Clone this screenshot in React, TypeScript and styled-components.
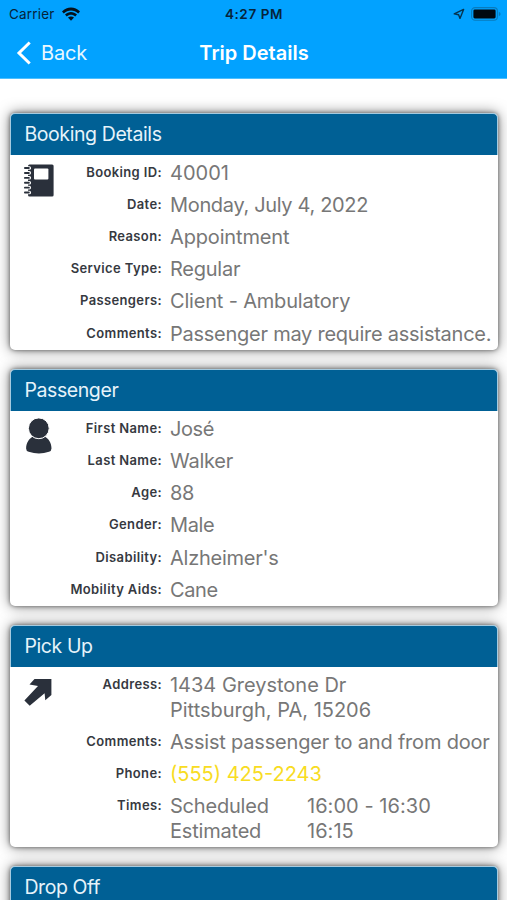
import React from "react";
import styled, { createGlobalStyle } from "styled-components";

const GlobalStyle = createGlobalStyle`
  * { box-sizing: border-box; }
  html, body { margin: 0; background: #fff; overflow: hidden; }
  body { font-family: Inter, "Liberation Sans", sans-serif; }
`;

const Screen = styled.div`
  width: 507px;
  height: 900px;
  overflow: hidden;
  background: #fff;
`;

const TopBar = styled.header`
  height: 79.4px;
  background: #02a2ff;
  border-bottom: 1px solid #4dbfff;
`;

const StatusBar = styled.div`
  height: 27px;
  display: grid;
  grid-template-columns: 1fr auto 1fr;
  align-items: center;
  padding: 0 6px 0 9px;
  color: #06243a;
  font-size: 13.5px;
`;

const StatusSide = styled.div<{ $end?: boolean }>`
  display: flex;
  align-items: center;
  gap: ${(p) => (p.$end ? "6px" : "7px")};
  letter-spacing: 0.2px;
  justify-content: ${(p) => (p.$end ? "flex-end" : "flex-start")};
`;

const Clock = styled.span`
  font-weight: 600;
  font-size: 13.5px;
  letter-spacing: 0.6px;
  margin-left: -2px;
`;

const NavBar = styled.nav`
  height: 51px;
  display: grid;
  grid-template-columns: 1fr auto 1fr;
  align-items: center;
  padding: 0 15px 0 16px;
  color: #fff;
`;

const BackButton = styled.button`
  display: flex;
  align-items: center;
  gap: 10px;
  padding: 0;
  border: 0;
  background: none;
  color: #e9f8ff;
  font: 400 20px Inter, sans-serif;
  letter-spacing: -0.15px;
`;

const Title = styled.h1`
  margin: 0;
  font-size: 20px;
  font-weight: 600;
  letter-spacing: 0;
`;

const Cards = styled.main`
  display: flex;
  flex-direction: column;
  gap: 19.2px;
  padding: 33.4px 9.5px 0 10.4px;
`;

const Card = styled.section`
  flex: none;
  border-radius: 5px;
  background: #fff;
  box-shadow: 0 0 4px rgba(0, 0, 0, 0.5), 0 0 14px rgba(0, 0, 0, 0.5);
`;

const CardHeader = styled.h2`
  height: 42px;
  margin: 0;
  padding: 0 13px;
  border: solid #a5cbe0;
  border-width: 0.5px 0.5px 0;
  border-radius: 5px 5px 0 0;
  background: #006095;
  color: #e6f3fa;
  font-size: 19.5px;
  font-weight: 400;
  line-height: 41px;
  letter-spacing: -0.4px;
`;

const CardBody = styled.div`
  display: grid;
  grid-template-columns: 45.1px 1fr;
  padding: 6.1px 0 3.6px 12.5px;
`;

const IconSlot = styled.div`
  padding-top: 3px;
  height: 40px;
  svg { display: block; }
`;

const Fields = styled.dl`
  display: flex;
  flex-direction: column;
  gap: 7.55px;
  margin: 0;
`;

const Field = styled.div`
  display: grid;
  grid-template-columns: 94px 1fr;
  column-gap: 8px;
`;

const Label = styled.dt`
  text-align: right;
  white-space: nowrap;
  font-size: 13px;
  font-weight: 600;
  line-height: 23px;
  letter-spacing: 0.37px;
  color: #36393f;
`;

const Value = styled.dd<{ $link?: boolean; $tracking?: number }>`
  margin: 0;
  white-space: nowrap;
  font-size: 20px;
  line-height: 24.6px;
  letter-spacing: ${(p) => p.$tracking ?? -0.25}px;
  color: ${(p) => (p.$link ? "#f8dc22" : "#777")};
`;

const TimeRow = styled.div`
  display: grid;
  grid-template-columns: 137px 1fr;
`;

const TimeSpan = styled.span`
  letter-spacing: 0.05px;
`;

const Wifi = () => (
  <svg width="18" height="14" viewBox="0 0 18 14" fill="#06121c">
    <path d="M0 4.5C5-.7 13-.7 18 4.5L16.2 6.4C12.2 2.5 5.8 2.5 1.8 6.4Z" />
    <path d="M3 7.6C6.4 4.2 11.6 4.2 15 7.6L13.2 9.4C10.8 7.2 7.2 7.2 4.8 9.4Z" />
    <path d="M6 10.6C7.7 9 10.3 9 12 10.6L9 13.7Z" />
  </svg>
);

const LocationArrow = () => (
  <svg width="12" height="12" viewBox="0 0 12 12" fill="none" stroke="#06344f" strokeWidth="1.4" strokeLinejoin="round">
    <path d="M1.2 5.8 10.6 1.4 7 10.4 5.6 6.8Z" />
  </svg>
);

const Battery = () => (
  <svg width="30" height="14" viewBox="0 0 30 14">
    <rect x=".6" y=".6" width="25.8" height="12.6" rx="3.5" fill="none" stroke="#087bbd" strokeWidth="1.1" />
    <rect x="2.4" y="2.4" width="22.2" height="9" rx="1.4" fill="#000810" />
    <path d="M27.8 4.7Q29.6 5.4 29.6 7T27.8 9.3Z" fill="#087bbd" />
  </svg>
);

const Chevron = () => (
  <svg width="15" height="24" viewBox="0 0 15 24" fill="none" stroke="#fff" strokeWidth="3">
    <path d="M13.7 1.5 3 12 13.7 22.5" />
  </svg>
);

const Notebook = () => (
  <svg width="32" height="34" viewBox="0 0 32 34">
    <rect x="5" y=".4" width="25.6" height="32" rx="1.5" fill="#2a303b" />
    {[4, 8.9, 13.8, 18.7, 23.6, 28.5].map((y) => (
      <g key={y}>
        <rect x="3" y={y - 1.8} width="5" height="3.6" rx="1.6" fill="#fff" />
        <rect x="1" y={y - 0.9} width="5.8" height="1.9" rx=".9" fill="#2a303b" />
      </g>
    ))}
    <rect x="11" y="4.6" width="14.4" height="10.8" rx="1" fill="#fff" />
  </svg>
);

const PersonSvg = styled.svg`
  overflow: visible;
`;

const Person = () => (
  <PersonSvg width="32" height="36" viewBox="0 0 32 36" fill="#2a303b">
    <path d="M3.1 28.4C3.2 22.4 6.5 18.4 9.6 16.8C13.6 19.6 18 19.6 22 16.8C25.2 18.4 28.4 22.4 28.5 28.4Q28.4 30.9 26 31.8Q16 35 5.7 31.8Q3.1 30.9 3.1 28.4Z" />
    <circle cx="15.8" cy="8.3" r="10.4" stroke="#fff" strokeWidth="1" />
  </PersonSvg>
);

const UpArrow = () => (
  <svg width="32" height="32" viewBox="0 0 32 32" fill="#2a303b">
    <path d="M11.5 3H28.4V19L22.3 24.3 21.6 17.2 6.7 29.8 1.4 24.6 15 10 6.5 8.4Z" />
  </svg>
);

interface Item {
  label: string;
  value: React.ReactNode;
  link?: boolean;
  tracking?: number;
}

interface InfoCardProps {
  title: string;
  icon: React.ReactNode;
  items: Item[];
}

const InfoCard = ({ title, icon, items }: InfoCardProps) => (
  <Card>
    <CardHeader>{title}</CardHeader>
    <CardBody>
      <IconSlot>{icon}</IconSlot>
      <Fields>
        {items.map((item) => (
          <Field key={item.label}>
            <Label>{item.label}:</Label>
            <Value $link={item.link} $tracking={item.tracking}>{item.value}</Value>
          </Field>
        ))}
      </Fields>
    </CardBody>
  </Card>
);

const booking: Item[] = [
  { label: "Booking ID", value: "40001", tracking: 0 },
  { label: "Date", value: "Monday, July 4, 2022", tracking: -0.33 },
  { label: "Reason", value: "Appointment", tracking: -0.15 },
  { label: "Service Type", value: "Regular" },
  { label: "Passengers", value: "Client - Ambulatory", tracking: -0.18 },
  { label: "Comments", value: "Passenger may require assistance." },
];

const passenger: Item[] = [
  { label: "First Name", value: "José", tracking: -0.4 },
  { label: "Last Name", value: "Walker" },
  { label: "Age", value: "88" },
  { label: "Gender", value: "Male", tracking: -0.4 },
  { label: "Disability", value: "Alzheimer's" },
  { label: "Mobility Aids", value: "Cane", tracking: -0.4 },
];

const pickUp: Item[] = [
  { label: "Address", value: <>1434 Greystone Dr<br />Pittsburgh, PA, 15206</>, tracking: -0.01 },
  { label: "Comments", value: "Assist passenger to and from door", tracking: -0.2 },
  { label: "Phone", value: "(555) 425-2243", link: true, tracking: 0 },
  {
    label: "Times",
    value: (
      <>
        <TimeRow><span>Scheduled</span><TimeSpan>16:00 - 16:30</TimeSpan></TimeRow>
        <TimeRow><span>Estimated</span><TimeSpan>16:15</TimeSpan></TimeRow>
      </>
    ),
    tracking: -0.2,
  },
];

export default function App() {
  return (
    <Screen>
      <GlobalStyle />
      <TopBar>
        <StatusBar>
          <StatusSide>Carrier <Wifi /></StatusSide>
          <Clock>4:27 PM</Clock>
          <StatusSide $end><LocationArrow /><Battery /></StatusSide>
        </StatusBar>
        <NavBar>
          <BackButton><Chevron />Back</BackButton>
          <Title>Trip Details</Title>
        </NavBar>
      </TopBar>
      <Cards>
        <InfoCard title="Booking Details" icon={<Notebook />} items={booking} />
        <InfoCard title="Passenger" icon={<Person />} items={passenger} />
        <InfoCard title="Pick Up" icon={<UpArrow />} items={pickUp} />
        <InfoCard title="Drop Off" icon={null} items={[]} />
      </Cards>
    </Screen>
  );
}
